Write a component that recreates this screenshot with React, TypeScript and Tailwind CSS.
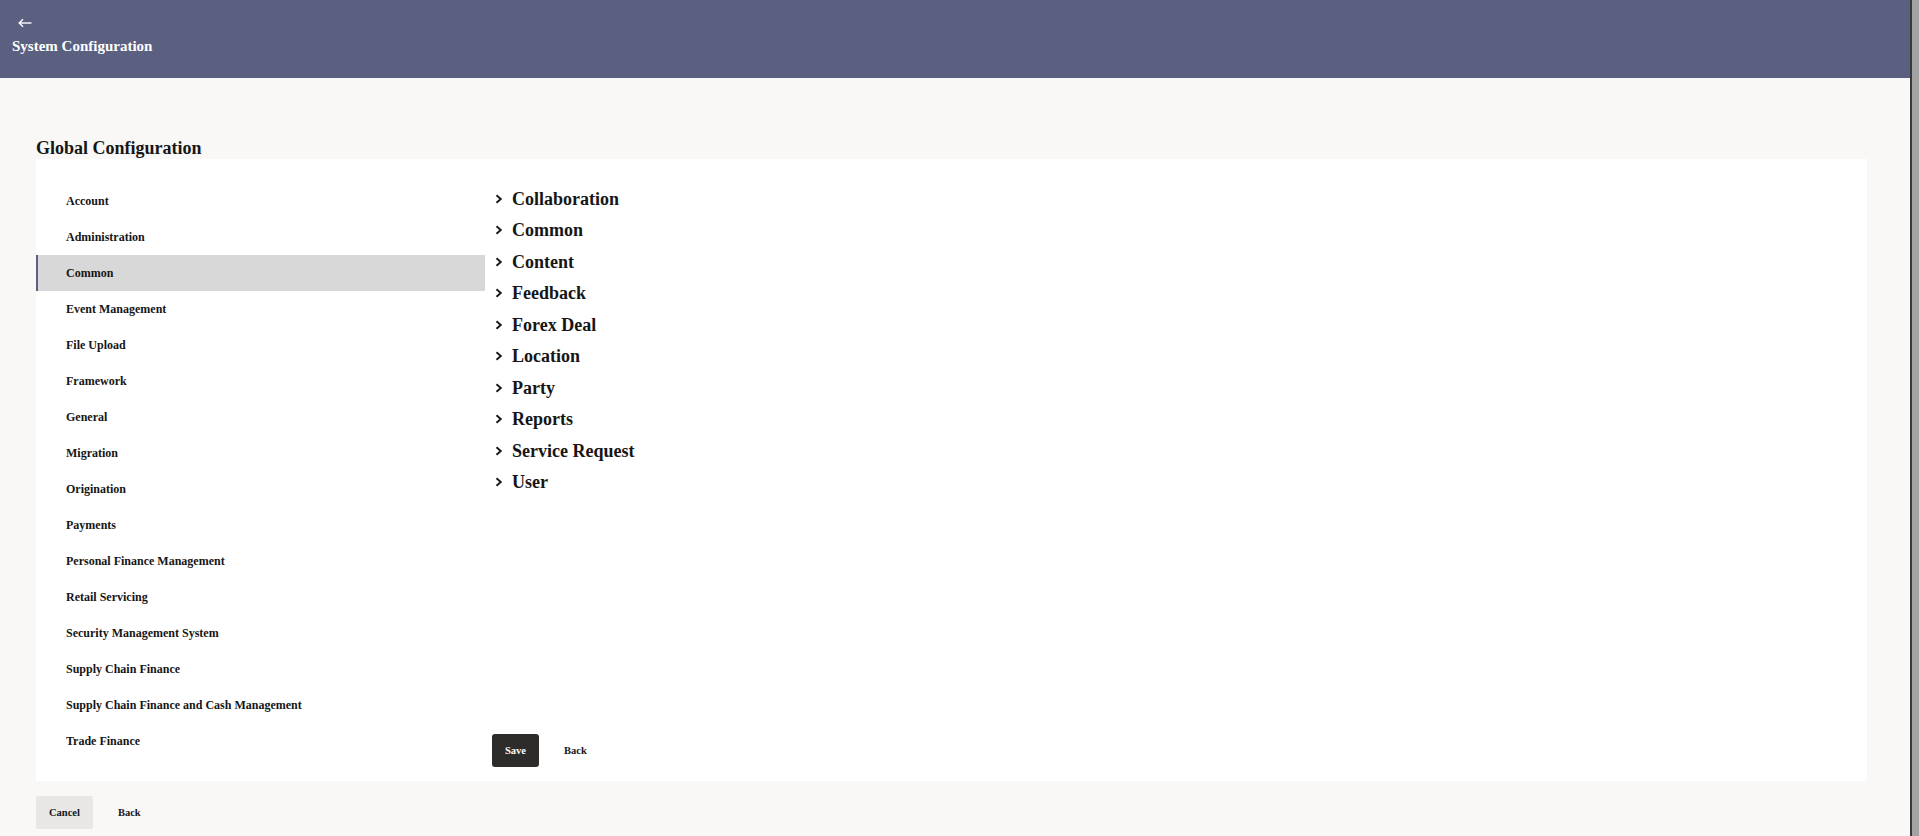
import React from "react";

const navItems = [
  "Account",
  "Administration",
  "Common",
  "Event Management",
  "File Upload",
  "Framework",
  "General",
  "Migration",
  "Origination",
  "Payments",
  "Personal Finance Management",
  "Retail Servicing",
  "Security Management System",
  "Supply Chain Finance",
  "Supply Chain Finance and Cash Management",
  "Trade Finance",
];

const sections = [
  "Collaboration",
  "Common",
  "Content",
  "Feedback",
  "Forex Deal",
  "Location",
  "Party",
  "Reports",
  "Service Request",
  "User",
];

const serif = { fontFamily: '"Liberation Serif", "Times New Roman", serif' };

function BackArrow() {
  return (
    <svg width="14" height="12" viewBox="0 0 14 12" fill="none">
      <path d="M1 6H13.5" stroke="white" strokeWidth="1.4" />
      <path d="M5 2.2L1.2 6L5 9.8" stroke="white" strokeWidth="1.4" strokeLinejoin="miter" />
    </svg>
  );
}

function Chevron() {
  return (
    <svg width="8" height="10" viewBox="0 0 8 10" fill="none">
      <path d="M1.5 1.2L5.8 5L1.5 8.8" stroke="#161616" strokeWidth="1.9" />
    </svg>
  );
}

export default function App() {
  const active = "Common";
  return (
    <div className="flex h-[836px] w-full overflow-hidden text-[#161616]" style={serif}>
      <div className="flex min-w-0 flex-1 flex-col bg-[#f9f8f7]">
        {/* Top bar */}
        <header className="h-[78px] shrink-0 bg-[#5b5f80] pl-[12px] pt-[17px] text-white">
          <div className="ml-[6px] flex h-[12px] items-center">
            <BackArrow />
          </div>
          <h1 className="mt-[8px] text-[15px] font-bold leading-[18px]">System Configuration</h1>
        </header>

        {/* Title */}
        <h2 className="pl-[36px] pt-[59px] text-[18px] font-bold leading-[22px]">Global Configuration</h2>

        {/* Main panel */}
        <div className="ml-[36px] mr-[43px] flex h-[622px] bg-white">
          <nav className="w-[449px] shrink-0 pt-[24px]">
            {navItems.map((item) => (
              <div
                key={item}
                className={
                  item === active
                    ? "flex h-[36px] items-center border-l-[2px] border-[#5b5f80] bg-[#d8d8d8] pl-[28px] text-[12px] font-bold"
                    : "flex h-[36px] items-center border-l-[2px] border-transparent pl-[28px] text-[12px] font-bold"
                }
              >
                {item}
              </div>
            ))}
          </nav>

          <div className="flex flex-1 flex-col pb-[14px] pl-[7px] pt-[24px]">
            <ul>
              {sections.map((s) => (
                <li key={s} className="flex h-[31.5px] items-center">
                  <span className="ml-[3px] mr-[9px] flex w-[8px] items-center">
                    <Chevron />
                  </span>
                  <span className="text-[18px] font-bold leading-none">{s}</span>
                </li>
              ))}
            </ul>
            <div className="mt-auto flex gap-3">
              <button className="h-[33px] rounded-[3px] bg-[#2e2c2b] px-[13px] text-[10.5px] font-bold text-white">
                Save
              </button>
              <button className="h-[33px] px-[13px] text-[10.5px] font-bold">Back</button>
            </div>
          </div>
        </div>

        {/* Footer actions */}
        <div className="mt-[15px] flex gap-3 pl-[36px]">
          <button className="h-[33px] rounded-[2px] bg-[#e8e7e5] px-[13px] text-[10.5px] font-bold">Cancel</button>
          <button className="h-[33px] px-[13px] text-[10.5px] font-bold">Back</button>
        </div>
      </div>

      {/* Window scroll track */}
      <div className="w-[9px] shrink-0 border-l-[2px] border-[#3a3a3a] bg-[#a3a3a3]" />
    </div>
  );
}
